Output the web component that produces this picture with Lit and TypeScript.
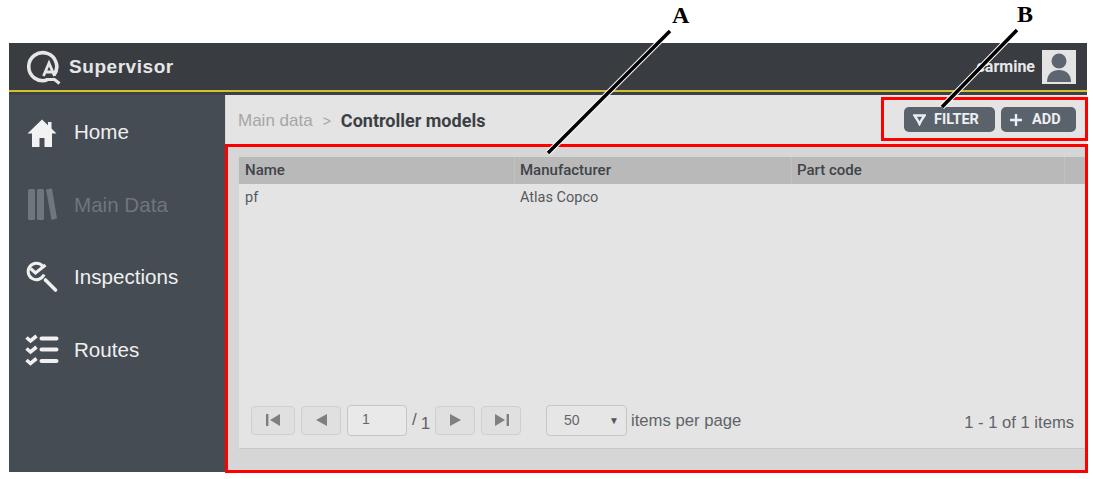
import { LitElement, html, css, svg } from "lit";
import { customElement } from "lit/decorators.js";

const home = html`<svg class="ico" viewBox="0 0 30 30" width="30" height="30"><path fill="#f2f2f2" d="M15 2.5 0.5 16.5h4.5V30h7.5v-9h5v9H25V16.5h4.5L24.5 11.5V5h-3.5v3.2z"/></svg>`;
const books = html`<svg class="ico" viewBox="0 0 30 34" width="30" height="34" fill="#6f767c"><rect x="1" y="1" width="7" height="31" rx="1.5"/><rect x="10" y="1" width="7" height="31" rx="1.5"/><path d="M19 1.6 25 0.5 30 30.5 24.5 32z"/></svg>`;
const insp = html`<svg class="ico" viewBox="0 0 34 32" width="34" height="32" fill="none" stroke="#f0f0f0"><path stroke-width="3" d="M17.5 5A8.2 8.2 0 1 0 19 13.5"/><path stroke-width="3.2" d="M5.5 7.5l5 4.5 10-8"/><path stroke-width="3.6" stroke-linecap="round" d="M20.5 19l10 10"/></svg>`;
const routes = html`<svg class="ico" viewBox="0 0 36 32" width="36" height="32" fill="none" stroke="#f0f0f0"><path stroke-width="3.6" d="M2.5 3.5l4 3.5 6-5M2.5 14.5l4 3.5 6-5M2.5 26l4 3.5 6-5"/><path stroke-width="4" stroke-linecap="round" d="M17.5 4.5h15M17.5 15.5h15M17.5 27h15"/></svg>`;

@customElement("app-root")
export class AppRoot extends LitElement {
  static styles = css`
    :host { display: block; position: relative; width: 1093px; height: 479px; background: #fff; overflow: hidden; font-family: "Liberation Sans", Arial, sans-serif; }
    .frame { display: flex; flex-direction: column; margin: 43px 0 0 9px; width: 1078px; height: 429px; }
    .top { flex: none; height: 47px; background: #393d42; display: flex; align-items: center; justify-content: space-between; padding: 0 11px 0 18px; }
    .brand { display: flex; align-items: center; gap: 7px; color: #e6e6e6; font-weight: 700; font-size: 19px; letter-spacing: 0.55px; padding-top: 1px; }
    .user { display: flex; align-items: center; gap: 7px; color: #e8e8e8; font-family: Roboto, sans-serif; font-weight: 700; font-size: 16px; }
    .avatar { width: 34px; height: 34px; background: #e4e4e4; display: flex; align-items: center; justify-content: center; }
    .rule { flex: none; height: 5px; background: #3c4146; border-top: 2px solid #d3c030; box-sizing: border-box; border-bottom: 1px solid #3c4146; }
    .body { flex: 1; display: flex; min-height: 0; }
    .side { flex: none; width: 216px; background: #454c53; display: flex; flex-direction: column; padding-top: 19px; box-sizing: border-box; }
    .nav { height: 72.5px; flex: none; display: flex; align-items: flex-start; color: #efefef; font-size: 20.6px; }
    .nav .slot { width: 65px; height: 36px; display: flex; align-items: center; justify-content: center; box-sizing: border-box; }
    .nav .lbl { line-height: 36px; }
    .nav.off { color: #6f767c; }
    .main { flex: 1; display: flex; flex-direction: column; min-width: 0; background: #d6d6d6; padding-left: 1px; box-sizing: border-box; }
    .crumb { flex: none; height: 49px; background: #e4e4e4; display: flex; align-items: center; justify-content: space-between; padding: 1px 11px 1px 12px; box-sizing: border-box; }
    .path { display: flex; align-items: center; font-size: 17px; color: #a6a6a6; margin-top: 2px; }
    .path .sep { margin: 0 10px; font-size: 14px; }
    .path b { color: #3b4045; font-family: Roboto, sans-serif; font-size: 18px; font-weight: 700; }
    .acts { display: flex; gap: 6px; }
    .btn { height: 25px; background: #5a636c; border-radius: 5px; color: #eceff2; font-family: Roboto, sans-serif; font-weight: 700; font-size: 14.5px; display: flex; align-items: center; padding-left: 9px; box-sizing: border-box; }
    .btn.f { width: 91px; gap: 8px; }
    .btn.a { width: 75px; gap: 10px; }
    .wrap { flex: 1; padding: 13px 2px 23px 13px; min-height: 0; display: flex; }
    .grid { flex: 1; background: #e4e4e4; display: flex; flex-direction: column; border-bottom: 1px solid #c8c8c8; }
    .row { display: grid; grid-template-columns: 276px 277px 273px 1fr; }
    .head { height: 27px; background: #b9b9b9; color: #3f4449; font-family: Roboto, sans-serif; font-weight: 500; font-size: 15px; line-height: 27px; }
    .head > div { padding-left: 5px; border-right: 1px solid #c2c2c2; }
    .head > div:first-child, .cells > div:first-child { padding-left: 6px; }
    .head > div:last-child { border-right: none; }
    .cells { height: 28px; color: #55595e; font-family: Roboto, sans-serif; font-size: 14.5px; line-height: 28px; }
    .cells > div { padding-left: 5px; }
    .spacer { flex: 1; }
    .pager { flex: none; display: flex; align-items: center; height: 32px; padding: 0 11px 0 12px; margin-bottom: 12px; color: #5f6368; }
    .pb { height: 29px; box-sizing: border-box; background: #e0e0e0; border: 1px solid #cfcfcf; border-radius: 4px; display: flex; align-items: center; justify-content: center; margin-right: 6px; }
    .pb.last { margin-right: 0; }
    .w44 { width: 44px; } .w41 { width: 40px; }
    .num { width: 60px; height: 31px; box-sizing: border-box; border: 1px solid #c6c6c6; border-radius: 4px; background: #e9e9e9; font-size: 14px; color: #666; line-height: 27px; padding-left: 14px; }
    .tot { width: 28px; box-sizing: border-box; padding-left: 5px; font-size: 17px; display: flex; gap: 4px; }
    .tot i { font-style: normal; font-size: 17px; position: relative; top: 4px; }
    .sel { width: 81px; height: 31px; box-sizing: border-box; border: 1px solid #c6c6c6; border-radius: 4px; margin-left: 25px; background: #e6e6e6; display: flex; align-items: center; justify-content: space-between; padding: 0 7px 0 17px; font-size: 14px; color: #666; }
    .sel span { font-size: 10px; color: #555; }
    .ipp { margin-left: 4px; font-size: 16.7px; margin-top: 2px; }
    .count { margin-left: auto; font-size: 16.6px; margin-top: 6px; }
    .overlay { position: absolute; left: 0; top: 0; pointer-events: none; }
    .overlay text { font-family: "Liberation Serif", serif; font-weight: 700; font-size: 24px; fill: #000; }
  `;

  render() {
    return html`
      <div class="frame">
        <div class="top">
          <div class="brand">
            <svg width="35" height="36" viewBox="0 0 35 36" fill="none" stroke="#e6e6e6">
              <path stroke-width="3.6" d="M27 26A14 14 0 1 0 20 31"/>
              <path stroke-width="2.8" d="M16.5 27l5.5-13 5.5 13M18 23h8"/>
              <path stroke-width="3" d="M19 30.5h8.5l5 4"/>
            </svg>
            <span>Supervisor</span>
          </div>
          <div class="user">
            <span>carmine</span>
            <div class="avatar">
              <svg width="28" height="30" viewBox="0 0 28 30" fill="#5d6670"><circle cx="14" cy="9" r="7.5"/><path d="M2 30c0-8 5-12 12-12s12 4 12 12z"/></svg>
            </div>
          </div>
        </div>
        <div class="rule"></div>
        <div class="body">
          <div class="side">
            <div class="nav"><div class="slot">${home}</div><div class="lbl">Home</div></div>
            <div class="nav off"><div class="slot">${books}</div><div class="lbl">Main Data</div></div>
            <div class="nav"><div class="slot">${insp}</div><div class="lbl">Inspections</div></div>
            <div class="nav"><div class="slot">${routes}</div><div class="lbl">Routes</div></div>
          </div>
          <div class="main">
            <div class="crumb">
              <div class="path"><span>Main data</span><span class="sep">&gt;</span><b>Controller models</b></div>
              <div class="acts">
                <div class="btn f">
                  <svg width="13" height="12" viewBox="0 0 13 12" fill="none" stroke="#eceff2" stroke-width="2.4"><path d="M1.5 1.5h10L8.2 6.5 6.5 10 4.8 6.5z"/></svg>
                  <span>FILTER</span>
                </div>
                <div class="btn a">
                  <svg width="12" height="12" viewBox="0 0 12 12" stroke="#eceff2" stroke-width="2.4"><path d="M6 0v12M0 6h12"/></svg>
                  <span>ADD</span>
                </div>
              </div>
            </div>
            <div class="wrap">
              <div class="grid">
                <div class="row head"><div>Name</div><div>Manufacturer</div><div>Part code</div><div></div></div>
                <div class="row cells"><div>pf</div><div>Atlas Copco</div><div></div><div></div></div>
                <div class="spacer"></div>
                <div class="pager">
                  <div class="pb w44"><svg width="15" height="12" viewBox="0 0 15 12" fill="#7f7f7f"><rect x="0" y="0" width="2.4" height="12"/><path d="M14 0v12L4 6z"/></svg></div>
                  <div class="pb w41"><svg width="11" height="12" viewBox="0 0 11 12" fill="#7f7f7f"><path d="M11 0v12L0 6z"/></svg></div>
                  <div class="num">1</div>
                  <div class="tot"><span>/</span><i>1</i></div>
                  <div class="pb w41"><svg width="11" height="12" viewBox="0 0 11 12" fill="#7f7f7f"><path d="M0 0v12l11-6z"/></svg></div>
                  <div class="pb w41 last"><svg width="15" height="12" viewBox="0 0 15 12" fill="#7f7f7f"><rect x="12.6" y="0" width="2.4" height="12"/><path d="M1 0v12l10-6z"/></svg></div>
                  <div class="sel">50<span>▼</span></div>
                  <div class="ipp">items per page</div>
                  <div class="count">1 - 1 of 1 items</div>
                </div>
              </div>
            </div>
          </div>
        </div>
      </div>
      <svg class="overlay" width="1093" height="479" viewBox="0 0 1093 479">
        ${svg`
          <rect x="226.5" y="145.5" width="860" height="326" fill="none" stroke="#f00" stroke-width="3"/>
          <rect x="882.5" y="98.5" width="204" height="41" fill="none" stroke="#f00" stroke-width="3"/>
          <path d="M548 153 670 31" stroke="#fff" stroke-width="5.5"/>
          <path d="M548 153 670 31" stroke="#000" stroke-width="3.6"/>
          <path d="M942 107 1017 30" stroke="#fff" stroke-width="5.5"/>
          <path d="M942 107 1017 30" stroke="#000" stroke-width="3.6"/>
          <text x="672" y="23">A</text>
          <text x="1017" y="22">B</text>
        `}
      </svg>
    `;
  }
}
